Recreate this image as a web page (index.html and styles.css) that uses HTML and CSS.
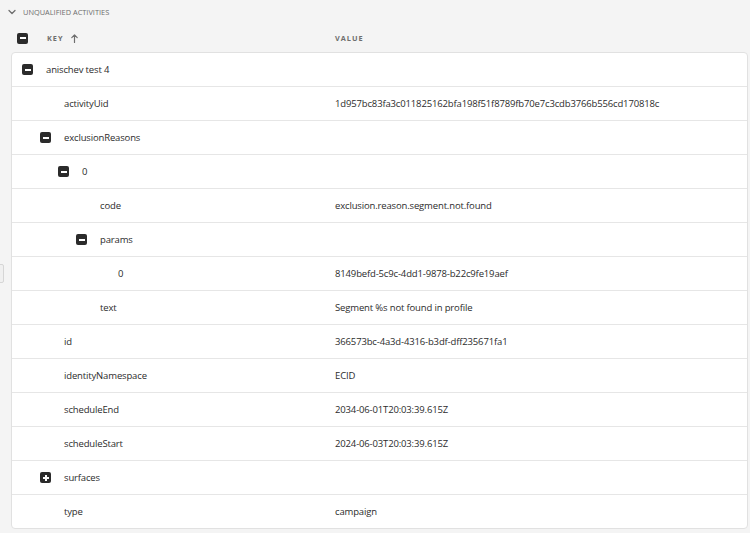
FILE: index.html
```html
<!DOCTYPE html>
<html>
<head>
<meta charset="utf-8">
<link rel="stylesheet" href="styles.css">
</head>
<body>
<div class="page">
  <div class="section-title">
    <svg class="chev" width="8" height="6" viewBox="0 0 8 6"><path d="M1 1.5 L4 4.5 L7 1.5" fill="none" stroke="#6e6e6e" stroke-width="1.3" stroke-linecap="round" stroke-linejoin="round"/></svg>
    <span>UNQUALIFIED ACTIVITIES</span>
  </div>
  <div class="table-head">
    <div class="head-key">
      <span class="box minus"></span>
      <span class="head-label">KEY</span>
      <svg class="sort" width="7" height="9" viewBox="0 0 7 9"><path d="M3.5 8.5 V1 M0.8 3.6 L3.5 0.9 L6.2 3.6" fill="none" stroke="#6e6e6e" stroke-width="1.2" stroke-linecap="round" stroke-linejoin="round"/></svg>
    </div>
    <div class="head-label">VALUE</div>
  </div>
  <div class="card">
    <div class="row"><div class="key d0"><span class="box minus"></span>anischev test 4</div><div class="val"></div></div>
    <div class="row"><div class="key d1"><span class="sp"></span>activityUid</div><div class="val">1d957bc83fa3c011825162bfa198f51f8789fb70e7c3cdb3766b556cd170818c</div></div>
    <div class="row"><div class="key d1"><span class="box minus"></span>exclusionReasons</div><div class="val"></div></div>
    <div class="row"><div class="key d2"><span class="box minus"></span>0</div><div class="val"></div></div>
    <div class="row"><div class="key d3"><span class="sp"></span>code</div><div class="val">exclusion.reason.segment.not.found</div></div>
    <div class="row"><div class="key d3"><span class="box minus"></span>params</div><div class="val"></div></div>
    <div class="row"><div class="key d4"><span class="sp"></span>0</div><div class="val">8149befd-5c9c-4dd1-9878-b22c9fe19aef</div></div>
    <div class="row"><div class="key d3"><span class="sp"></span>text</div><div class="val">Segment %s not found in profile</div></div>
    <div class="row"><div class="key d1"><span class="sp"></span>id</div><div class="val">366573bc-4a3d-4316-b3df-dff235671fa1</div></div>
    <div class="row"><div class="key d1"><span class="sp"></span>identityNamespace</div><div class="val">ECID</div></div>
    <div class="row"><div class="key d1"><span class="sp"></span>scheduleEnd</div><div class="val">2034-06-01T20:03:39.615Z</div></div>
    <div class="row"><div class="key d1"><span class="sp"></span>scheduleStart</div><div class="val">2024-06-03T20:03:39.615Z</div></div>
    <div class="row"><div class="key d1"><span class="box plus"></span>surfaces</div><div class="val"></div></div>
    <div class="row"><div class="key d1"><span class="sp"></span>type</div><div class="val">campaign</div></div>
  </div>
  <div class="handle"></div>
</div>
</body>
</html>
```

FILE: styles.css
```css
html, body {
  margin: 0;
  padding: 0;
  background: #f4f4f4;
}
body {
  font-family: "Open Sans", "Liberation Sans", sans-serif;
  color: #2c2c2c;
  width: 750px;
  height: 533px;
  overflow: hidden;
}
.page {
  position: relative;
  padding: 0 2px 0 11px;
}
.section-title {
  height: 24px;
  display: flex;
  align-items: center;
  gap: 7px;
  margin-left: -3px;
  font-size: 7.4px;
  color: #6e6e6e;
}
.table-head {
  height: 28px;
  display: grid;
  grid-template-columns: 324px 1fr;
  align-items: center;
}
.head-key {
  display: flex;
  align-items: center;
  padding-left: 6px;
}
.head-key .box {
  margin-right: 19px;
}
.head-label {
  font-size: 7.3px;
  font-weight: 700;
  letter-spacing: 1px;
  color: #6e6e6e;
}
.sort {
  margin-left: 7px;
}
.card {
  background: #fff;
  border: 1px solid #e1e1e1;
  border-radius: 4px;
  overflow: hidden;
}
.row {
  height: 33px;
  display: grid;
  grid-template-columns: 323px 1fr;
  align-items: center;
  border-top: 1px solid #e6e6e6;
  font-size: 9.5px;
  letter-spacing: -0.15px;
}
.row:first-child {
  border-top: none;
}
.key {
  display: flex;
  align-items: center;
  padding-left: 10px;
}
.key.d1 { padding-left: 28px; }
.key.d2 { padding-left: 46px; }
.key.d3 { padding-left: 64px; }
.key.d4 { padding-left: 82px; }
.sp {
  width: 24px;
  flex: none;
}
.box {
  width: 11px;
  height: 11px;
  border-radius: 2px;
  background: #2b2b2b;
  position: relative;
  flex: none;
}
.key .box {
  margin-right: 13px;
}
.box::before {
  content: "";
  position: absolute;
  left: 2.5px;
  top: 4.5px;
  width: 6px;
  height: 2px;
  background: #fff;
}
.box.plus::after {
  content: "";
  position: absolute;
  left: 4.5px;
  top: 2.5px;
  width: 2px;
  height: 6px;
  background: #fff;
}
.val {
  white-space: nowrap;
}
.handle {
  position: absolute;
  left: -2px;
  top: 264px;
  width: 4px;
  height: 17px;
  border: 1px solid #d6d6d6;
  border-radius: 2px;
  background: #f0f0f0;
}
```
